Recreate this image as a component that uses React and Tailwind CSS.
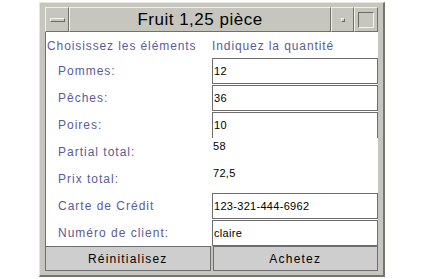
export default function App() {
  const rows = [
    { label: "Pommes:", value: "12", field: true },
    { label: "Pêches:", value: "36", field: true },
    { label: "Poires:", value: "10", field: true, open: true },
    { label: "Partial total:", value: "58" },
    { label: "Prix total:", value: "72,5" },
    { label: "Carte de Crédit", value: "123-321-444-6962", field: true },
    { label: "Numéro de client:", value: "claire", field: true },
  ];

  return (
    <div className="w-[431px] h-[279px] bg-white pt-[2px] pl-[39px] font-['Liberation_Sans',Arial,sans-serif]">
      <div className="w-[346px] h-[275px] bg-[#c6c6be] border-t border-l border-[#e6e6de] border-r-2 border-b-2 border-r-[#75756f] border-b-[#75756f] pt-[4px] pl-[5px] pr-[5px] flex flex-col">
        {/* title bar */}
        <div className="flex h-[25px] text-black">
          <div className="w-[24px] border-t border-l border-[#f0f0e8] border-r border-b border-r-[#707068] border-b-[#707068] flex items-center justify-center">
            <div className="w-[15px] h-[4px] border-t border-l border-[#f4f4ee] border-r border-b border-r-[#6a6a64] border-b-[#6a6a64]"></div>
          </div>
          <div className="flex-1 border-t border-l border-[#f0f0e8] border-r border-b border-r-[#707068] border-b-[#707068] flex items-center justify-center text-[17px] tracking-[0.5px] leading-none">
            Fruit 1,25 pièce
          </div>
          <div className="w-[23px] border-t border-l border-[#f0f0e8] border-r border-b border-r-[#707068] border-b-[#707068] flex items-center justify-center">
            <div className="w-[4px] h-[4px] border-t border-l border-[#f4f4ee] border-r border-b border-r-[#6a6a64] border-b-[#6a6a64]"></div>
          </div>
          <div className="w-[24px] border-t border-l border-[#f0f0e8] border-r border-b border-r-[#707068] border-b-[#707068] flex items-center justify-center">
            <div className="w-[16px] h-[16px] border-t border-l border-[#6a6a64] border-r border-b border-r-[#f4f4ee] border-b-[#f4f4ee]"></div>
          </div>
        </div>

        {/* content */}
        <div className="flex-1 bg-white border-l border-[#707068] flex flex-col">
          <div className="flex h-[26px] items-center text-[12px] tracking-[0.9px] text-[#5b5b9b] leading-none pt-[1px]">
            <div className="w-[166px] pl-[1px] whitespace-nowrap">Choisissez les éléments</div>
            <div className="whitespace-nowrap">Indiquez la quantité</div>
          </div>
          <div className="flex flex-col gap-[1px]">
            {rows.map((r) => (
              <div key={r.label} className="flex h-[26px]">
                <div className="w-[166px] pl-[12px] flex items-center text-[12px] tracking-[1px] text-[#5b5b9b] whitespace-nowrap">
                  {r.label}
                </div>
                {r.field ? (
                  <div
                    className={
                      "flex-1 border-t border-l border-r border-[#6e6e6e] flex items-center pl-[1px] text-[11px] text-black tracking-[0.3px] " +
                      (r.open ? "border-b-0" : "border-b")
                    }
                  >
                    {r.value}
                  </div>
                ) : (
                  <div className="flex-1 pl-[1px] text-[11px] leading-[14px] text-black tracking-[0.3px]">
                    {r.value}
                  </div>
                )}
              </div>
            ))}
          </div>
        </div>

        {/* buttons */}
        <div className="flex h-[25px] gap-[2px] mb-[4px]">
          <div className="flex-1 bg-[#cecece] border border-[#6e6e6e] flex items-center justify-center text-[12px] tracking-[1.2px] text-black">
            Réinitialisez
          </div>
          <div className="flex-1 bg-[#cecece] border border-[#6e6e6e] flex items-center justify-center text-[12px] tracking-[1.2px] text-black">
            Achetez
          </div>
        </div>
      </div>
    </div>
  );
}
